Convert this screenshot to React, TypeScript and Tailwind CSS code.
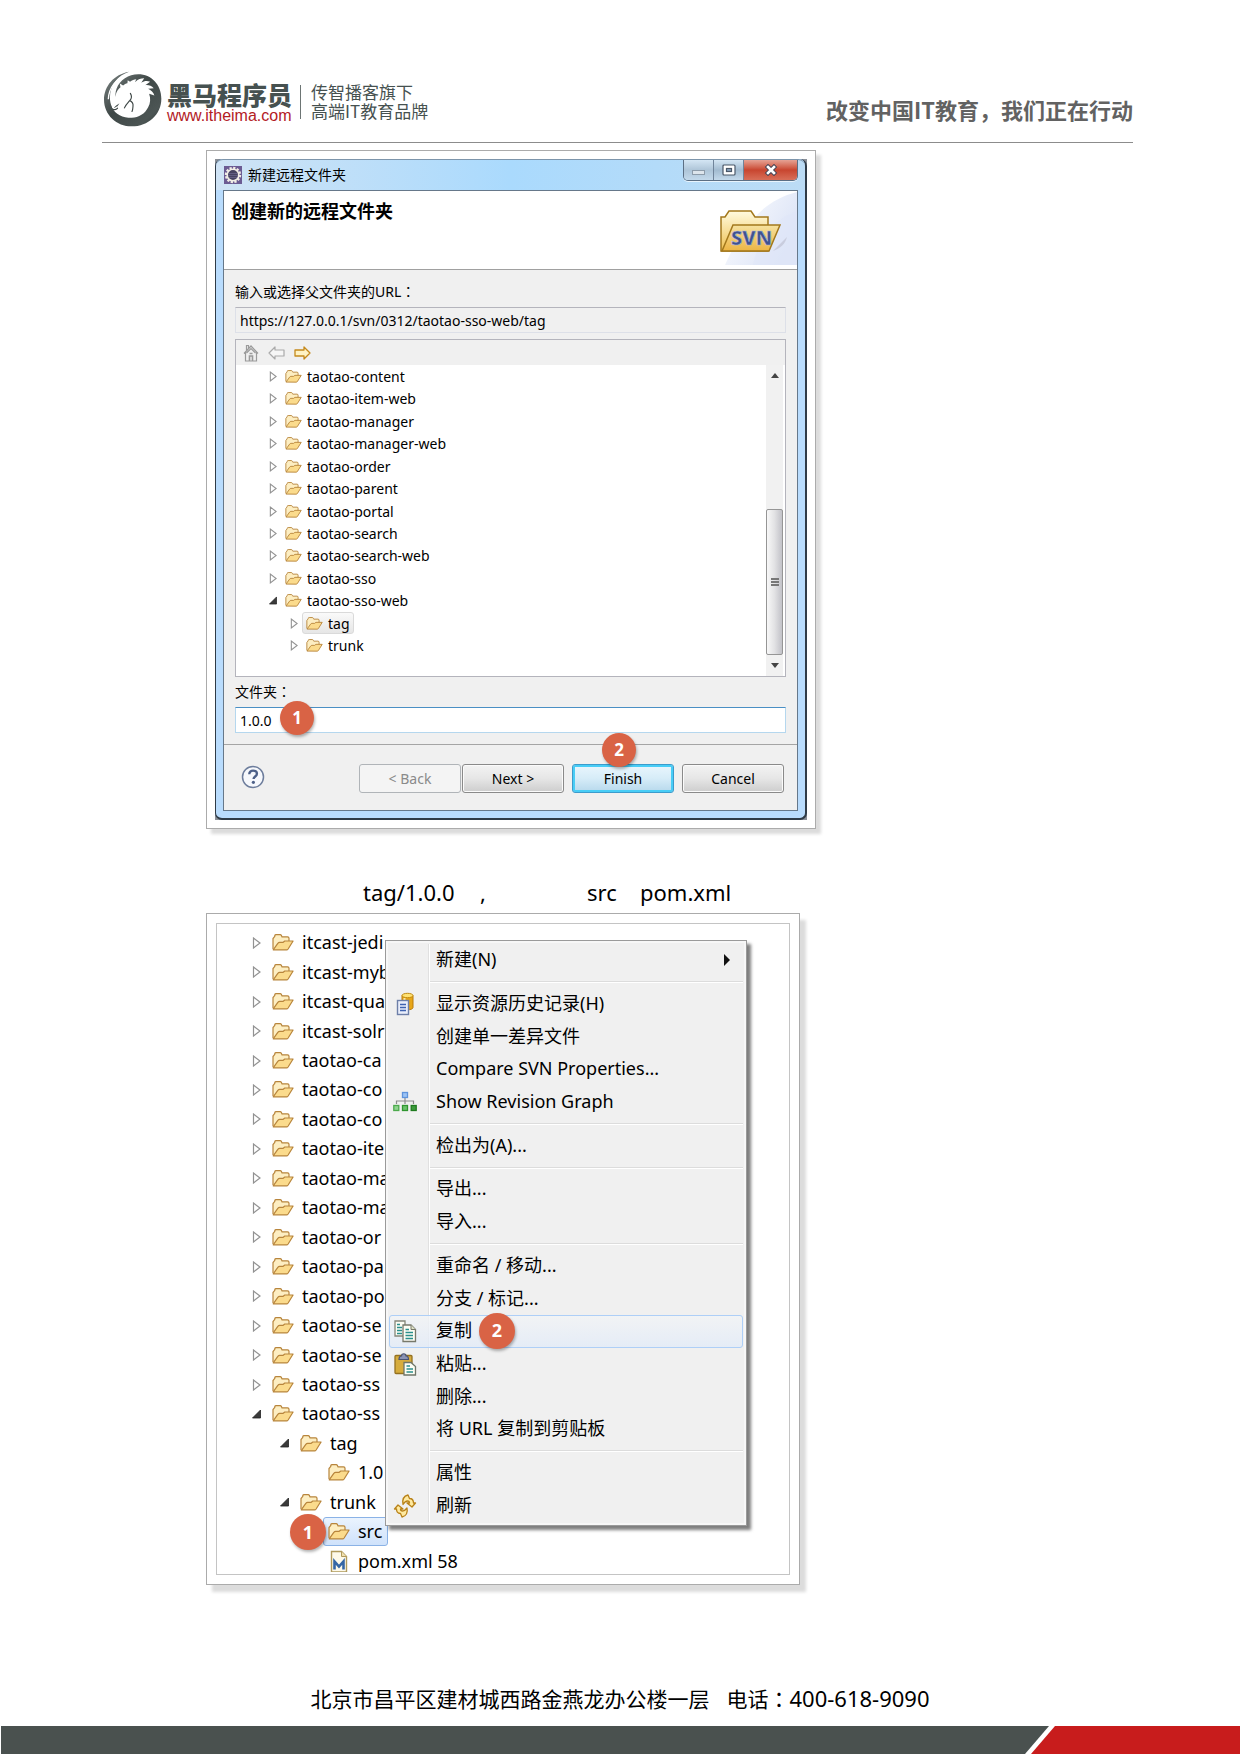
import React from "react";

function HorseLogo() {
  return (
    <svg viewBox="42 33 176 168" className="h-[56px] w-[58px] shrink-0" aria-hidden="true">
      <defs>
        <linearGradient id="logoRing" x1="0" y1="0" x2="1" y2="1">
          <stop offset="0" stopColor="#7d8584" />
          <stop offset="0.45" stopColor="#3f4847" />
          <stop offset="0.8" stopColor="#4c5554" />
          <stop offset="1" stopColor="#333c3b" />
        </linearGradient>
      </defs>
      <path
        fill="url(#logoRing)"
        d="M118 34C72 42 42 78 42 119c0 46 38 81 84 81 50 0 90-36 90-84 0-42-30-74-70-74-30 0-56 17-66 44-4 12-4 22-2 30l-10 28c2 6 6 8 10 9-8-2-18-18-18-40 0-38 24-68 58-79z"
      />
      <path
        fill="#fff"
        d="M69 148c-4-4-3-9-1-14 3-9 5-18 9-28 3-12 8-20 15-25l-2-11 10 6c4-4 8-6 13-7l1-9 7 5c6-5 12-8 19-8l-4 9c9-9 18-12 28-12l-9 14c10-7 18-7 27-3l-15 10c11-1 19 2 26 9l-17 2c9 4 16 11 19 20l-16-5c5 14 4 29-3 41-10 20-28 31-50 32-27 0-50-10-60-33 3 4 8 4 11 1 3-2 5-3 6-3l6-9c-8 5-12 8-20 18z"
      />
      <path fill="none" stroke="#3f4847" strokeWidth="3.5" strokeLinecap="round" d="M122 100c5 8 4 16-2 22-6 7-12 12-16 22M120 122c7 3 11 10 10 17-1 6 0 10-3 16M68 147c4 4 10 3 15-2" />
      <path fill="none" stroke="#fff" strokeWidth="4" d="M113 43C80 52 56 84 55 118" />
    </svg>
  );
}

function Folder({ className }: { className: string }) {
  return (
    <svg viewBox="0 0 22 17" className={className} aria-hidden="true">
      <path d="M1 15V4.500L2.800 2.300V1.500C3 .9 3.400.7 4 .7h4.200c.6 0 1 .3 1.200.9l.6 1.200h5.500c1 0 1.500.5 1.500 1.400V8" fill="#fdeec2" stroke="#b8853c" strokeWidth="1.200" />
      <path d="M1.200 15.800 6 9.200c.4-.6.9-.9 1.600-.9h3.600l1.600-1.300h8.300l-5 8c-.4.600-.8.900-1.500.900z" fill="#fbdb8c" stroke="#b8853c" strokeWidth="1.200" strokeLinejoin="round" />
    </svg>
  );
}

function Twisty({ open, className }: { open?: boolean; className: string }) {
  return (
    <svg viewBox="0 0 9 12" className={className} aria-hidden="true">
      {open ? <path d="M8.500 2v8H.5z" fill="#3a3a3a" stroke="#222" strokeWidth=".8" /> : <path d="M1.500 1v10L8 6z" fill="#fff" stroke="#929292" strokeWidth="1.200" />}
    </svg>
  );
}

function Badge({ n, className }: { n: number; className: string }) {
  return (
    <span className={"absolute z-10 flex items-center justify-center rounded-full bg-[#d96345] font-bold text-white shadow-[1px_2px_3px_rgba(0,0,0,0.3)] " + className}>
      {n}
    </span>
  );
}

function Colon() {
  return <span className="font-['Noto_Sans_CJK_TC',sans-serif] leading-none">：</span>;
}

function EclipseIcon() {
  return (
    <svg viewBox="0 0 18 18" className="h-[18px] w-[18px]" aria-hidden="true">
      <rect width="18" height="18" fill="#6b5b93" />
      <circle cx="9" cy="9" r="7" fill="none" stroke="#f2eee6" strokeWidth="2.400" strokeDasharray="2.200 1.460" />
      <circle cx="9" cy="9" r="5.800" fill="#464260" stroke="#f2eee6" strokeWidth="1.600" />
      <path d="M4.500 7.500h9M4 9.500h10M5 11.500h8" stroke="#6e6990" strokeWidth=".7" />
    </svg>
  );
}

function SvnIcon() {
  return (
    <svg viewBox="0 0 84 76" className="h-[76px] w-[84px]" aria-hidden="true">
      <defs>
        <linearGradient id="svnSky" x1="0" y1="0" x2="1" y2="0.600">
          <stop offset="0" stopColor="#fff" />
          <stop offset="1" stopColor="#dbe3f6" />
        </linearGradient>
        <linearGradient id="svnBack" x1="0" y1="0" x2="0" y2="1">
          <stop offset="0" stopColor="#fffbe0" />
          <stop offset="1" stopColor="#efc050" />
        </linearGradient>
        <linearGradient id="svnFront" x1="0" y1="0" x2="0" y2="1">
          <stop offset="0" stopColor="#f6e2a0" />
          <stop offset="1" stopColor="#edb544" />
        </linearGradient>
      </defs>
      <path d="M84 1C48 10 28 38 12 74h72z" fill="url(#svnSky)" />
      <path d="M84 20C58 30 46 46 40 74h44z" fill="#dfe6f8" opacity=".6" />
      <path d="M60 60 74 46c-2 7-6 11-14 14z" fill="#b4b4c4" opacity=".5" />
      <path d="M8 60V26h4l4-6h22l4 6h13v34z" fill="url(#svnBack)" stroke="#a3781c" strokeWidth="1.500" />
      <path d="M9 60 20 34h47L56 60z" fill="url(#svnFront)" stroke="#a3781c" strokeWidth="1.500" />
      <text x="18" y="54" fontFamily="Noto Sans" fontWeight="800" fontSize="20" fill="#40528f" stroke="#a9b6dc" strokeWidth=".6">SVN</text>
    </svg>
  );
}

type Node = { name: string; level: number; state: "open" | "closed" | "leaf"; file?: boolean; selected?: boolean };

const remoteTree: Node[] = [
  ...["content", "item-web", "manager", "manager-web", "order", "parent", "portal", "search", "search-web", "sso"].map(
    (s): Node => ({ name: "taotao-" + s, level: 0, state: "closed" })
  ),
  { name: "taotao-sso-web", level: 0, state: "open" },
  { name: "tag", level: 1, state: "closed", selected: true },
  { name: "trunk", level: 1, state: "closed" },
];

const repoTree: Node[] = [
  ...[
    "itcast-jedi", "itcast-myb", "itcast-qua", "itcast-solr", "taotao-ca", "taotao-co", "taotao-co", "taotao-ite",
    "taotao-ma", "taotao-ma", "taotao-or", "taotao-pa", "taotao-po", "taotao-se", "taotao-se", "taotao-ss",
  ].map((name): Node => ({ name, level: 0, state: "closed" })),
  { name: "taotao-ss", level: 0, state: "open" },
  { name: "tag", level: 1, state: "open" },
  { name: "1.0", level: 2, state: "leaf" },
  { name: "trunk", level: 1, state: "open" },
  { name: "src", level: 2, state: "leaf", selected: true },
  { name: "pom.xml 58", level: 2, state: "leaf", file: true },
];

function ButtonStrip() {
  const base = "h-[29px] w-[102px] rounded-[3px] border text-[14px] leading-[26px]";
  const plain = "border-[#8a8a8a] bg-linear-to-b from-[#f3f3f3] via-[#e6e6e6] to-[#cdcdcd] text-black shadow-[inset_0_0_0_1px_#fbfbfb]";
  return (
    <div className="flex flex-1 items-start border-t border-[#a5a5a5] pt-[19px] pr-[13px] pl-[17px]">
      <button type="button" aria-label="Help" className="mt-px">
        <svg viewBox="0 0 24 24" className="h-6 w-6">
          <circle cx="12" cy="12" r="10.500" fill="#f6f8fc" stroke="#6d7d9c" strokeWidth="1.500" />
          <path d="M8.300 9.200c0-2.300 1.500-3.600 3.800-3.600s3.800 1.200 3.800 3.100c0 2.700-3.300 2.900-3.300 5.300" fill="none" stroke="#4d6088" strokeWidth="2.400" />
          <circle cx="12.400" cy="17.300" r="1.600" fill="#4d6088" />
        </svg>
      </button>
      <div className="ml-auto flex">
        <button type="button" disabled className={base + " border-[#b0b4b8] bg-[#f4f4f4] text-[#8a8a8a]"}>&lt; Back</button>
        <button type="button" className={base + " ml-px " + plain}>Next &gt;</button>
        <div className="relative ml-2">
          <button type="button" className={base + " border-[#3c9ccc] bg-linear-to-b from-[#eaf6fd] via-[#d6ecf8] to-[#b6d8ec] text-black shadow-[inset_0_0_0_2px_#48cdf6]"}>
            Finish
          </button>
          <Badge n={2} className="-top-[31px] left-[30px] h-[34px] w-[34px] text-[17px]" />
        </div>
        <button type="button" className={base + " ml-2 " + plain}>Cancel</button>
      </div>
    </div>
  );
}

function WindowButtons() {
  return (
    <div className="flex h-[21px] overflow-hidden rounded-b-[5px] border border-t-0 border-[#5c6f84] shadow-[0_1px_0_#e8f4fd]">
      <button type="button" aria-label="Minimize" className="flex w-[30px] items-center justify-center border-r border-[#70849a] bg-linear-to-b from-[#d4e6f4] via-[#aec5d8] to-[#c3d9eb]">
        <span className="mt-1 h-[5px] w-[13px] border border-[#8d9caa] bg-[#dde5ec]" />
      </button>
      <button type="button" aria-label="Maximize" className="flex w-[30px] items-center justify-center border-r border-[#70849a] bg-linear-to-b from-[#d4e6f4] via-[#a2bbd0] to-[#c3d9eb]">
        <svg viewBox="0 0 14 12" className="h-3 w-3.5">
          <rect x="1" y="1" width="12" height="10" rx="1" fill="#fff" stroke="#4b5868" strokeWidth="1.200" />
          <rect x="4.500" y="4.500" width="5" height="3" fill="#8aa5c0" stroke="#4b5868" strokeWidth="1.200" />
        </svg>
      </button>
      <button type="button" aria-label="Close" className="flex w-[53px] items-center justify-center bg-linear-to-b from-[#e5a294] via-[#c8452f] to-[#d86e58]">
        <svg viewBox="0 0 14 12" className="h-3 w-3.5">
          <path d="M4 3 10 9M10 3 4 9" stroke="#4b4656" strokeWidth="4.600" strokeLinecap="square" />
          <path d="M4 3 10 9M10 3 4 9" stroke="#fff" strokeWidth="2.600" strokeLinecap="square" />
        </svg>
      </button>
    </div>
  );
}

function RemoteTree() {
  return (
    <div className="mt-[6px] flex h-[338px] flex-col border border-[#b4b4bc] bg-white">
      <div className="flex h-[25px] shrink-0 items-center gap-[9px] bg-[#f0f0f0] pl-[7px]">
        <button type="button" aria-label="Home">
          <svg viewBox="0 0 16 18" className="h-[18px] w-4" fill="none" stroke="#9a9a9a" strokeWidth="1.200">
            <path d="M1 9.500 8 2l7 7.500M2.500 8.500V17h11V8.500M3.500 6V1.500h2V4M3.500 9 8 4.500 12.500 9" />
            <path d="M6.500 17v-5h3v5M6.500 9.500h3" strokeWidth="1.600" />
          </svg>
        </button>
        <button type="button" aria-label="Back">
          <svg viewBox="0 0 17 14" className="h-3.5 w-[17px]"><path d="M1 7 7 1v3h9v6H7v3z" fill="#f6f6f6" stroke="#aaa" strokeWidth="1.200" strokeLinejoin="round" /></svg>
        </button>
        <button type="button" aria-label="Forward">
          <svg viewBox="0 0 17 14" className="h-3.5 w-[17px]"><path d="M16 7 10 1v3H1v6h9v3z" fill="#fff3c4" stroke="#c58a1c" strokeWidth="1.300" strokeLinejoin="round" /></svg>
        </button>
      </div>
      <div className="flex min-h-0 flex-1">
        <ul role="tree" className="flex h-[292px] flex-1 flex-col text-[14px]">
          {remoteTree.map((n) => (
            <li key={n.name} role="treeitem" aria-selected={!!n.selected} className={"flex flex-1 items-center " + (n.level ? "pl-[54px]" : "pl-[33px]")}>
              <Twisty open={n.state === "open"} className="h-[11px] w-2" />
              <span className={"ml-1 flex h-[22px] items-center gap-[5px] rounded-[3px] border pr-[3px] pl-[3px] " + (n.selected ? "border-[#dadada] bg-linear-to-b from-[#fafafa] to-[#e6e6e6]" : "border-transparent")}>
                <Folder className="h-[13px] w-[17px]" />
                {n.name}
              </span>
            </li>
          ))}
        </ul>
        <div className="flex w-[17px] flex-col items-center bg-[#f1f1f1]">
          <svg viewBox="0 0 8 5" className="mt-2 h-[5px] w-2"><path d="M0 5 4 0l4 5z" fill="#444" /></svg>
          <div className="mt-auto mb-2 flex h-[146px] w-[17px] flex-col items-center justify-center gap-px rounded-[2px] border border-[#959595] bg-linear-to-r from-[#f8f8f8] via-[#e2e2e4] to-[#c2c2c8]">
            <span className="h-[2px] w-2 bg-[#777]" />
            <span className="h-[2px] w-2 bg-[#777]" />
            <span className="h-[2px] w-2 bg-[#777]" />
          </div>
          <svg viewBox="0 0 8 5" className="mb-2 h-[5px] w-2"><path d="M0 0h8L4 5z" fill="#444" /></svg>
        </div>
        <div className="w-[2px]" />
      </div>
    </div>
  );
}

function WizardFigure() {
  return (
    <figure className="mt-[7px] ml-[206px] w-full max-w-[610px] border border-[#ababab] bg-white p-2 shadow-[5px_5px_3px_#dcdcdc]">
      <div className="bg-[#8b9098]">
        <div className="flex flex-col rounded-[7px] border-r-2 border-b-2 border-l border-[#2f3b47] bg-[#b9dcfd] px-[7px] pb-[7px]">
          <div className="-mx-[7px] flex h-[31px] items-start justify-between rounded-t-[7px] border-t border-[#7d95ab] bg-linear-to-r from-[#cfe3f5] via-[#aadafd] to-[#bcdcf5] pr-[7px] pl-[8px]">
            <div className="flex items-center gap-[6px] pt-[5px] text-[14px] leading-[19px]">
              <EclipseIcon />
              新建远程文件夹
            </div>
            <WindowButtons />
          </div>
          <div className="flex h-[621px] flex-col border border-[#66788a] bg-[#f0f0f0]">
            <div className="flex h-[79px] shrink-0 justify-between border-b border-[#a0a0a0] bg-white pl-[7px]">
              <h2 className="pt-[7px] text-[18px] leading-[26px] font-bold">创建新的远程文件夹</h2>
              <SvnIcon />
            </div>
            <div className="flex flex-col px-[11px] pt-[12px] text-[14px]">
              <label htmlFor="parent-url" className="h-[20px] leading-[20px]">输入或选择父文件夹的URL<Colon /></label>
              <input id="parent-url" readOnly defaultValue="https://127.0.0.1/svn/0312/taotao-sso-web/tag" className="mt-[5px] h-[26px] border border-[#dde0e8] border-t-[#b4b4bc] bg-[#f0f0f0] px-1 leading-[22px] outline-none" />
              <RemoteTree />
              <label htmlFor="folder-name" className="mt-[5px] h-[20px] leading-[20px]">文件夹<Colon /></label>
              <div className="relative mt-[5px] flex">
                <input id="folder-name" defaultValue="1.0.0" className="h-[26px] flex-1 border border-[#b5d7ee] border-t-[#4a8fc4] bg-white px-1 leading-[22px] outline-none" />
                <Badge n={1} className="-top-[6px] left-[45px] h-[34px] w-[34px] text-[17px]" />
              </div>
            </div>
            <div className="h-[11px] shrink-0" />
            <ButtonStrip />
          </div>
        </div>
      </div>
    </figure>
  );
}

const iconBox = "h-6 w-6";

function HistoryIcon() {
  return (
    <svg viewBox="0 0 24 24" className={iconBox} aria-hidden="true">
      <path d="M9 3.500v12c0 3 11 3 11 0v-12z" fill="#e8a618" stroke="#b87a0c" />
      <ellipse cx="14.500" cy="3.500" rx="5.500" ry="2.200" fill="#ffe272" stroke="#c08a12" />
      <path d="M11.500 6v10" stroke="#ffe9a0" strokeWidth="2" />
      <rect x="4.500" y="8.500" width="11" height="14" fill="#e9eefb" stroke="#6d7fa8" strokeWidth="1.400" />
      <path d="M7 12.500h6M7 15.500h6M7 18.500h6" stroke="#3e62b0" strokeWidth="1.300" />
    </svg>
  );
}

function GraphIcon() {
  return (
    <svg viewBox="0 0 24 24" className={iconBox} aria-hidden="true">
      <path d="M3.500 14v-3h17v3M12 8v6" fill="none" stroke="#8c8c8c" strokeWidth="1.200" />
      <rect x="9.500" y="2.500" width="5" height="5" fill="#9cc3f5" stroke="#5f94dc" strokeWidth="1.300" />
      <rect x=".8" y="15.500" width="5" height="5" fill="#8fd48f" stroke="#4caa4c" strokeWidth="1.300" />
      <rect x="9.500" y="15.500" width="5" height="5" fill="#6cc26c" stroke="#2f952f" strokeWidth="1.300" />
      <rect x="18.200" y="15.500" width="5" height="5" fill="#3c9a3c" stroke="#1d7a1d" strokeWidth="1.300" />
    </svg>
  );
}

function CopyIcon() {
  return (
    <svg viewBox="0 0 24 24" className={iconBox} aria-hidden="true">
      <path d="M2 2h10v15H2z" fill="#fcfdf4" stroke="#858779" strokeWidth="1.300" />
      <path d="M4 5.500h3M4 8.500h5M4 11.500h5M4 14.500h5" stroke="#2a8f8c" strokeWidth="1.500" />
      <path d="M10 6h8l4.500 4.500V22.500H10z" fill="#fcfdf4" stroke="#77796b" strokeWidth="1.300" />
      <path d="M18 6v4.500h4.500" fill="#dfe3c8" stroke="#77796b" />
      <path d="M12.500 10.500h3.500M12.500 13.500h7.500M12.500 16.500h7.500M12.500 19.500h7.500" stroke="#2a8f8c" strokeWidth="1.500" />
    </svg>
  );
}

function PasteIcon() {
  return (
    <svg viewBox="0 0 24 24" className={iconBox} aria-hidden="true">
      <rect x="2" y="3.500" width="17" height="18" rx="1" fill="#d6ac3c" stroke="#94701f" strokeWidth="1.300" />
      <path d="M6 7.500c0-3 1-3.500 2.500-3.500 0-3 4.500-3 4.500 0C15 4 15.500 5 15.500 7.500z" fill="#8b93b4" stroke="#4b5474" strokeWidth="1.200" />
      <path d="M11 10.500h7l4.500 4V23H11z" fill="#fcfdf4" stroke="#6f7568" strokeWidth="1.300" />
      <path d="M13.500 14h3.500M13.500 17h6.500M13.500 20h6.500" stroke="#2a8f8c" strokeWidth="1.600" />
    </svg>
  );
}

function RefreshIcon() {
  return (
    <svg viewBox="0 0 24 24" className={iconBox} aria-hidden="true" fill="#ffeaa0" stroke="#b98218" strokeWidth="1.300" strokeLinejoin="round">
      <path d="M10 10.500C9 5 11 2 15 1l1.500 3.500c3 0 4 2 4 4.500h2L19 13l-5-4h2.500c0-1.500-.5-2-2-2-2 0-3 1-4.500 3.500z" />
      <path d="M14 14c1 5-1 8-5 9l-1.500-3.500c-3 0-4-2-4-4.500h-2L5 11l5 4H7.500c0 1.500.5 2 2 2 2 0 3-1 4.500-3z" />
    </svg>
  );
}

type Entry = { label: string; icon?: React.ReactNode; submenu?: boolean; active?: boolean; badge?: number };

const menu: Entry[][] = [
  [{ label: "新建(N)", submenu: true }],
  [
    { label: "显示资源历史记录(H)", icon: <HistoryIcon /> },
    { label: "创建单一差异文件" },
    { label: "Compare SVN Properties..." },
    { label: "Show Revision Graph", icon: <GraphIcon /> },
  ],
  [{ label: "检出为(A)..." }],
  [{ label: "导出..." }, { label: "导入..." }],
  [
    { label: "重命名 / 移动..." },
    { label: "分支 / 标记..." },
    { label: "复制", icon: <CopyIcon />, active: true, badge: 2 },
    { label: "粘贴...", icon: <PasteIcon /> },
    { label: "删除..." },
    { label: "将 URL 复制到剪贴板" },
  ],
  [{ label: "属性" }, { label: "刷新", icon: <RefreshIcon /> }],
];

function ContextMenu() {
  return (
    <div role="menu" className="absolute top-[16px] left-[168px] z-10 flex h-[586px] w-[362px] flex-col border border-[#9a9a9a] bg-[#f0f0f0] p-[3px] text-[18px] shadow-[4px_4px_3px_rgba(0,0,0,0.5),inset_0_0_0_2px_#f7f7f7]">
      <div className="absolute top-[3px] bottom-[3px] left-[42px] w-[2px] border-r border-white bg-[#e0e0e0]" />
      {menu.map((group, gi) => (
        <React.Fragment key={gi}>
          {gi > 0 && (
            <div className="flex h-[11px] shrink-0 items-center pl-[41px]">
              <div className="h-[2px] flex-1 border-b border-white bg-[#dcdcdc]" />
            </div>
          )}
          {group.map((e) => (
            <button
              key={e.label}
              type="button"
              role="menuitem"
              className={"relative flex min-h-0 flex-1 items-center rounded-[3px] border pr-3 text-left " + (e.active ? "border-[#aecff7] bg-linear-to-b from-[#f2f4f6]/80 to-[#e2ebf8]/80" : "border-transparent")}
            >
              <span className="flex w-[46px] shrink-0 pl-[3px]">{e.icon}</span>
              <span className="pb-[2px] leading-[26px]">{e.label}</span>
              {e.submenu && (
                <svg viewBox="0 0 6 12" className="ml-auto h-3 w-1.5"><path d="M0 0l6 6-6 6z" fill="#111" /></svg>
              )}
              {e.badge && <Badge n={e.badge} className="-top-[3px] left-[89px] h-[36px] w-[36px] text-[18px]" />}
            </button>
          ))}
        </React.Fragment>
      ))}
    </div>
  );
}

function PomIcon() {
  return (
    <svg viewBox="0 0 22 22" className="h-[22px] w-[22px]" aria-hidden="true">
      <path d="M3.500 22V1.500h10l5 5V22z" fill="#fdf9ea" stroke="#b09a5c" strokeWidth="1.400" />
      <path d="M13.500 1.500v5h5" fill="#f0dfae" stroke="#b09a5c" />
      <path d="M6.500 19.500v-8l4.500 5 4.500-5v8" fill="none" stroke="#3566a5" strokeWidth="2.600" />
    </svg>
  );
}

const indent = ["pl-[35px]", "pl-[63px]", "pl-[91px]"];

function RepositoryFigure() {
  return (
    <figure className="ml-[206px] w-full max-w-[594px] border border-[#ababab] bg-white p-[9px] shadow-[6px_7px_3px_#dcdcdc]">
      <div className="relative h-[652px] border border-[#c4c4c4]">
        <ul role="tree" className="flex h-[652px] flex-col pt-[4px] text-[18px]">
          {repoTree.map((n, i) => (
            <li key={i} role="treeitem" aria-selected={!!n.selected} className={"flex min-h-0 flex-1 items-center " + indent[n.level]}>
              <span className="w-[9px]">{n.state !== "leaf" && <Twisty open={n.state === "open"} className="h-3 w-[9px]" />}</span>
              <span className={"relative ml-[6px] flex h-[29px] items-center gap-[8px] rounded-[3px] border pr-[5px] pl-[4px] " + (n.selected ? "border-[#8ab2e6] bg-linear-to-b from-[#eaf3fe] to-[#cfe2fb]" : "border-transparent")}>
                {n.file ? <PomIcon /> : <Folder className="h-[17px] w-[22px]" />}
                {n.name}
                {n.selected && <Badge n={1} className="-top-[4px] -left-[34px] h-[36px] w-[36px] text-[18px]" />}
              </span>
            </li>
          ))}
        </ul>
        <ContextMenu />
      </div>
    </figure>
  );
}

export default function App() {
  return (
    <div className="flex min-h-screen flex-col overflow-x-hidden bg-white font-['Noto_Sans','Noto_Sans_CJK_SC',sans-serif] text-black">
      <header className="mr-[107px] ml-[102px] flex items-start border-b border-[#8c8c8c] pt-[71px] pb-[15px] pl-[2px] font-['Noto_Sans_CJK_SC',sans-serif] text-[#465150]">
        <HorseLogo />
        <div className="ml-[5px] pt-[10px]">
          <div className="text-[25px] leading-[26px] font-black">黑马程序员</div>
          <a href="#home" className="block font-['Liberation_Sans',sans-serif] text-[16px] leading-[18px] text-[#b3201f]">www.itheima.com</a>
        </div>
        <div className="mt-[14px] ml-[8px] h-[34px] w-px bg-[#6d7574]" />
        <div className="mt-[11px] ml-[10px] text-[17px] leading-[19px]">
          <div>传智播客旗下</div>
          <div>高端IT教育品牌</div>
        </div>
        <div className="mt-[23px] ml-auto text-[22px] leading-[30px] font-bold text-[#626262]">改变中国IT教育，我们正在行动</div>
      </header>
      <main>
        <WizardFigure />
        <p className="mt-[48px] flex h-[36px] pl-[363px] text-[22px] leading-[30px]">
          <span className="w-[117px]">tag/1.0.0</span>
          <span className="w-[107px]">,</span>
          <span className="w-[53px]">src</span>
          <span>pom.xml</span>
        </p>
        <RepositoryFigure />
      </main>
      <footer className="mt-auto">
        <div className="flex items-center justify-center gap-[17px] pb-[11px] text-[21px] leading-[32px]">
          <span>北京市昌平区建材城西路金燕龙办公楼一层</span>
          <span>电话<Colon /><span className="text-[22px]">400-618-9090</span></span>
        </div>
        <div className="flex h-7 bg-white">
          <div className="flex-1 bg-[#4a514f] [clip-path:polygon(1px_0,100%_0,calc(100%_-_24px)_100%,1px_100%)]" />
          <div className="-ml-[18px] w-[209px] bg-[#c81c1c] [clip-path:polygon(24px_0,100%_0,100%_100%,0_100%)]" />
        </div>
      </footer>
    </div>
  );
}
